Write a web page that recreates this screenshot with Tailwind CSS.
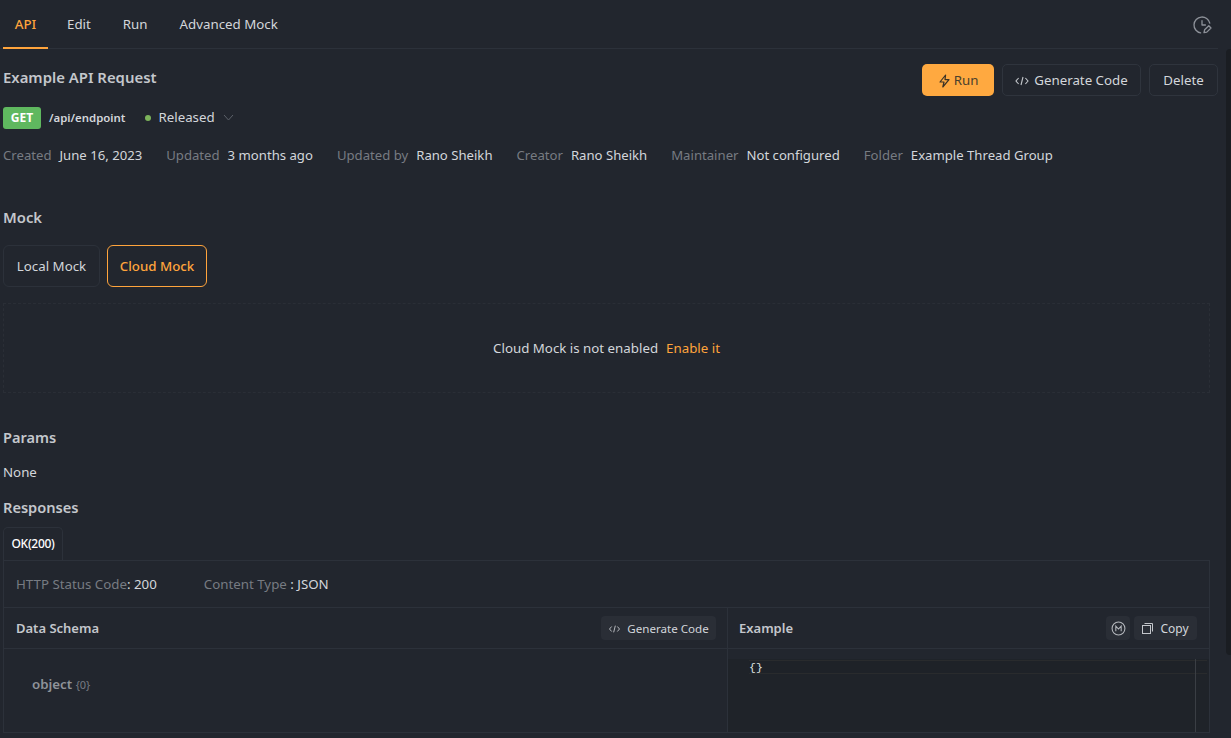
<!DOCTYPE html>
<html lang="en">
<head>
  <meta charset="UTF-8">
  <title>Example API Request</title>
  <script src="https://cdn.jsdelivr.net/npm/@tailwindcss/browser@4"></script>
</head>
<body class="bg-[#22262e] text-[#d3d6db] font-['Noto_Sans','Open_Sans',sans-serif] text-[13.3px] h-[738px] w-[1231px] overflow-hidden relative">
  <!-- scrollbar -->
  <div class="absolute right-0 top-[49px] h-[606px] w-[5px] bg-[#1a1d22] rounded-l"></div>

  <div class="w-[1218px]">
    <!-- tabs -->
    <div class="flex items-center justify-between h-[49px] border-b border-[#2c313a]">
      <div class="flex h-full">
        <div class="relative ml-[3px] w-[45px] pt-[2px] flex items-center justify-center text-[#ffa43c] font-medium">API
          <div class="absolute left-0 right-0 bottom-[-1px] h-[2px] bg-[#ffa43c]"></div>
        </div>
        <div class="ml-[19px] pt-[2px] flex items-center">Edit</div>
        <div class="ml-[32px] pt-[2px] flex items-center">Run</div>
        <div class="ml-[32px] pt-[2px] flex items-center">Advanced Mock</div>
      </div>
      <svg class="mr-[6px] mb-[-1px]" width="20" height="20" viewBox="0 0 20 20" fill="none" stroke="#8d9199" stroke-width="1.3" stroke-linecap="round" stroke-linejoin="round">
        <path d="M17.8 8.2A8 8 0 1 0 8.6 17.9"/>
        <path d="M10 5.6V10H13.4"/>
        <path d="M12 17.6L12.6 14.8L16.8 10.8L19 13L14.8 17.1Z"/>
      </svg>
    </div>

    <div class="pl-[3px]">
      <!-- title -->
      <div class="flex justify-between pt-[16px]">
        <div>
          <h1 class="text-[14.9px] font-semibold text-[#c4c7cc] leading-[24px]">Example API Request</h1>
          <div class="flex items-center mt-[16px] h-[24px] pt-[1px]">
            <span class="w-[38px] h-[22px] rounded-[3px] bg-[#5fb85f] text-white text-[12px] font-bold flex items-center justify-center">GET</span>
            <span class="ml-[8px] text-[11.4px] font-semibold text-[#d3d6db]">/api/endpoint</span>
            <span class="ml-[20px] w-[6px] h-[6px] rounded-full bg-[#7cb35b]"></span>
            <span class="ml-[7px]">Released</span>
            <svg class="ml-[8px]" width="11" height="7" viewBox="0 0 11 7" fill="none" stroke="#5c6169"><path d="M1 1L5.5 6L10 1"/></svg>
          </div>
        </div>
        <div class="flex gap-[8px] mt-[-1px]">
          <button class="h-[32px] w-[72px] pt-[1px] rounded-[5px] bg-[#ffa940] text-[#4a3f2d] flex items-center justify-center gap-[3px]">
            <svg width="13" height="14" viewBox="0 0 13 14" fill="none" stroke="#3a3226" stroke-width="1.2" stroke-linejoin="round"><path d="M7.6 1L2 8H6L4.8 13L11 5.6H7Z"/></svg>
            Run
          </button>
          <button class="h-[32px] w-[139px] pt-[1px] rounded-[5px] border border-[#2f343d] flex items-center justify-center gap-[5px]">
            <svg width="14" height="12" viewBox="0 0 14 12" fill="none" stroke="#c3c6cb" stroke-width="1.1"><path d="M3.6 3L1 6L3.6 9M10.4 3L13 6L10.4 9M8 2L6 10"/></svg>
            Generate Code
          </button>
          <button class="h-[32px] w-[69px] pt-[1px] rounded-[5px] border border-[#2f343d] flex items-center justify-center">Delete</button>
        </div>
      </div>

      <!-- meta -->
      <div class="flex items-center h-[20px] mt-[17px] whitespace-nowrap text-[13.15px]">
        <span class="text-[#777b82]">Created</span><span class="ml-[8px]">June 16, 2023</span>
        <span class="ml-[24px] text-[#777b82]">Updated</span><span class="ml-[8px]">3 months ago</span>
        <span class="ml-[24px] text-[#777b82]">Updated by</span><span class="ml-[8px]">Rano Sheikh</span>
        <span class="ml-[24px] text-[#777b82]">Creator</span><span class="ml-[8px]">Rano Sheikh</span>
        <span class="ml-[24px] text-[#777b82]">Maintainer</span><span class="ml-[8px]">Not configured</span>
        <span class="ml-[24px] text-[#777b82]">Folder</span><span class="ml-[8px]">Example Thread Group</span>
      </div>

      <!-- mock -->
      <h2 class="mt-[39px] text-[14.8px] font-semibold text-[#c4c7cc] leading-[24px]">Mock</h2>
      <div class="flex gap-[7px] mt-[16px]">
        <div class="h-[42px] w-[97px] pt-[1px] rounded-[6px] border border-[#2c313a] flex items-center justify-center">Local Mock</div>
        <div class="h-[42px] w-[100px] pt-[1px] rounded-[6px] border border-[#ffa43c] text-[#ffa43c] font-medium flex items-center justify-center">Cloud Mock</div>
      </div>
      <div class="mt-[16px] w-[1207px] h-[90px] pt-[1px] border border-dashed border-[#2a2e36] flex items-center justify-center">
        <span>Cloud Mock is not enabled</span><span class="ml-[8px] text-[#ffa43c]">Enable it</span>
      </div>

      <!-- params -->
      <h2 class="mt-[32px] text-[14.6px] font-semibold text-[#c4c7cc] leading-[24px]">Params</h2>
      <p class="mt-[13px] leading-[20px]">None</p>

      <!-- responses -->
      <h2 class="mt-[13px] text-[14.6px] font-semibold text-[#c4c7cc] leading-[24px]">Responses</h2>
      <div class="mt-[8px] w-[60px] h-[33px] rounded-t-[5px] border border-b-0 border-[#2c313a] flex items-center justify-center text-[12px] font-medium tracking-[-0.3px] text-white">OK(200)</div>
      <div class="w-[1207px] border border-[#2c313a]">
        <div class="h-[47px] pt-[1px] flex items-center px-[12px] border-b border-[#2c313a]">
          <span class="text-[#777b82]">HTTP Status Code</span><span>: 200</span>
          <span class="ml-[47px] text-[#777b82]">Content Type</span><span>&nbsp;: JSON</span>
        </div>
        <div class="flex h-[124px]">
          <div class="w-[724px] border-r border-[#2c313a]">
            <div class="h-[41px] flex items-center justify-between pl-[12px] pr-[11px] border-b border-[#2c313a]">
              <span class="pt-[1px] font-semibold text-[13px] text-[#c4c7cc]">Data Schema</span>
              <button class="h-[24px] w-[115px] pt-[1px] rounded-[4px] bg-[#2a2e36] flex items-center justify-center gap-[6px] text-[11.6px]">
                <svg width="13" height="10" viewBox="0 0 14 12" fill="none" stroke="#c3c6cb" stroke-width="1.1"><path d="M3.6 3L1 6L3.6 9M10.4 3L13 6L10.4 9M8 2L6 10"/></svg>
                Generate Code
              </button>
            </div>
            <div class="pl-[28px] pt-[25px] leading-[20px]"><span class="font-semibold text-[#8f9399]">object</span> <span class="text-[11px] text-[#777b82]">{0}</span></div>
          </div>
          <div class="flex-1 min-w-0">
            <div class="h-[41px] flex items-center justify-between pl-[11px] pr-[12px] border-b border-[#2c313a]">
              <span class="pt-[1px] font-semibold text-[13px] text-[#c4c7cc]">Example</span>
              <div class="flex gap-[4px]">
                <div class="w-[24px] h-[24px] rounded-[4px] bg-[#2a2e36] flex items-center justify-center">
                  <svg width="15" height="15" viewBox="0 0 14 14" fill="none" stroke="#b5b8bd" stroke-width="1"><circle cx="7" cy="7" r="6"/><path d="M4.5 9.5V4.8L7 7.5L9.5 4.8V9.5"/></svg>
                </div>
                <button class="h-[24px] w-[63px] pt-[1px] rounded-[4px] bg-[#2a2e36] flex items-center justify-center gap-[7px] text-[12px]">
                  <svg width="11" height="11" viewBox="0 0 11 11" fill="none" stroke="#c3c6cb"><rect x="0.5" y="2.5" width="8" height="8"/><path d="M2.5 0.5H10.5V8.5"/></svg>
                  Copy
                </button>
              </div>
            </div>
            <div class="relative h-[73px] mt-[10px] bg-[#1f2329]">
              <div class="absolute left-[21px] right-[2px] top-[1px] h-[14px] bg-[#1e2228] border-y border-[#292b2d]"></div>
              <div class="absolute right-[13px] top-0 bottom-0 w-px bg-[#3a3e44]"></div>
              <span class="absolute left-[21px] top-0 text-[11.5px] font-['Liberation_Mono',monospace] text-[#dfe2e0]">{}</span>
            </div>
          </div>
        </div>
      </div>
    </div>
  </div>
</body>
</html>
